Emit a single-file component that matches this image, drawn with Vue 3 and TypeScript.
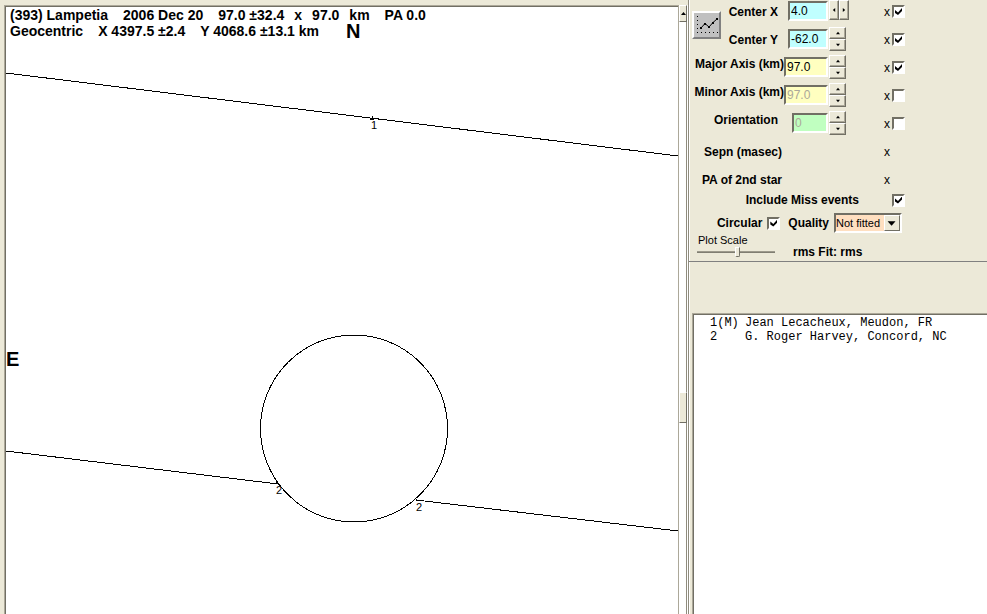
<script setup lang="ts">
import { ref } from 'vue'

interface Param {
  id: string
  label: string
  raised: boolean
  value: string
  size: string
  tint: string
  sideways: boolean
  fitted: boolean
}

const params = ref<Param[]>([
  { id: 'center-x', label: 'Center X', raised: false, value: '4.0', size: 'medium', tint: 'cyan', sideways: true, fitted: true },
  { id: 'center-y', label: 'Center Y', raised: false, value: '-62.0', size: 'medium', tint: 'cyan', sideways: false, fitted: true },
  { id: 'major', label: 'Major Axis (km)', raised: true, value: '97.0', size: 'wide', tint: 'yellow', sideways: false, fitted: true },
  { id: 'minor', label: 'Minor Axis (km)', raised: true, value: '97.0', size: 'wide', tint: 'yellow', sideways: false, fitted: false },
  { id: 'orientation', label: 'Orientation', raised: true, value: '0', size: 'narrow', tint: 'green', sideways: false, fitted: false },
])

const doubleStar = ['Sepn (masec)', 'PA of 2nd star']
const includeMiss = ref(true)
const circular = ref(true)
const quality = ref('Not fitted')
const plotScale = ref(52)

const observers = [
  { index: '1(M)', name: 'Jean Lecacheux, Meudon, FR' },
  { index: '2', name: 'G. Roger Harvey, Concord, NC' },
]

function step(p: Param, delta: number) {
  p.value = (parseFloat(p.value) + delta).toFixed(1)
}
</script>

<template>
  <main class="window">
    <section class="plot">
      <header class="caption">
        <p class="line">
          <span>(393) Lampetia</span><span>2006 Dec 20</span><span class="axes"><span>97.0 ±32.4</span><span>x</span><span>97.0</span><span>km</span></span><span>PA 0.0</span>
        </p>
        <p class="line">
          <span>Geocentric</span><span>X 4397.5 ±2.4</span><span>Y 4068.6 ±13.1 km</span><span class="north">N</span>
        </p>
      </header>
      <svg class="chords" viewBox="0 32 672 575">
        <g class="stroke">
          <path d="M0 66L672 149M0 444L272 477M410 493L672 524" />
          <path d="M366 109v4M364 112h4M270 475l4 3M409 491l3 3" />
          <circle cx="348" cy="421.500" r="93.500" />
        </g>
        <text class="compass" x="0" y="359">E</text>
        <text class="mark" x="365" y="122">1</text>
        <text class="mark" x="270" y="487">2</text>
        <text class="mark" x="410" y="504">2</text>
      </svg>
    </section>

    <div class="scrollbar">
      <button class="scroll-up" type="button" aria-label="Scroll up">
        <svg viewBox="0 0 5 3"><path d="M0 3L2.500 0L5 3z" /></svg>
      </button>
      <div class="scroll-thumb"></div>
    </div>

    <aside class="side">
      <form class="controls" @submit.prevent>
        <button class="plot-button" type="button" aria-label="Plot">
          <svg viewBox="0 0 24 22">
            <path class="dots" d="M2.500 2v16M2 18.500h22" />
            <path class="trace" d="M6 14L10 9.500L14 13L18 8.500L22 5" />
            <path class="nodes" d="M5 13h2v2h-2zM9 9h2v2h-2zM13 12h2v2h-2zM17 8h2v2h-2zM21 4h2v2h-2z" />
          </svg>
        </button>

        <div class="rows">
          <div v-for="p in params" :key="p.id" class="row">
            <label class="name" :class="{ raised: p.raised, flush: p.size === 'wide' }" :for="p.id">{{ p.label }}</label>
            <input :id="p.id" v-model="p.value" class="field" :class="[p.size, p.tint]" type="text" :disabled="!p.fitted" />
            <div class="spinner" :class="{ sideways: p.sideways }">
              <button type="button" :aria-label="'Change ' + p.label + ' back'" @click="step(p, p.sideways ? -1 : 1)">
                <svg viewBox="0 0 5 5"><path :d="p.sideways ? 'M4 0L1 2.500L4 5z' : 'M0 4L2.500 1L5 4z'" /></svg>
              </button>
              <button type="button" :aria-label="'Change ' + p.label + ' on'" @click="step(p, p.sideways ? 1 : -1)">
                <svg viewBox="0 0 5 5"><path :d="p.sideways ? 'M1 0L4 2.500L1 5z' : 'M0 1L2.500 4L5 1z'" /></svg>
              </button>
            </div>
            <label class="cross" :for="p.id + '-fit'">x</label>
            <input :id="p.id + '-fit'" v-model="p.fitted" class="tick" type="checkbox" />
          </div>
          <div v-for="name in doubleStar" :key="name" class="row">
            <span class="name star">{{ name }}</span>
            <span class="cross alone">x</span>
          </div>
        </div>

        <div class="miss">
          <label for="miss">Include Miss events</label>
          <input id="miss" v-model="includeMiss" class="tick" type="checkbox" />
        </div>

        <div class="shape">
          <label for="circular">Circular</label>
          <input id="circular" v-model="circular" class="tick" type="checkbox" />
          <label class="quality-name" for="quality">Quality</label>
          <div class="combo">
            <select id="quality" v-model="quality">
              <option>Not fitted</option>
            </select>
            <svg class="drop" viewBox="0 0 16 16"><path d="M3 6h9l-4.500 5z" /></svg>
          </div>
        </div>

        <div class="bottom">
          <div class="scale">
            <label for="scale">Plot Scale</label>
            <input id="scale" v-model="plotScale" type="range" min="0" max="100" />
          </div>
          <output class="rms">rms Fit: rms</output>
        </div>
      </form>

      <ol class="observers">
        <li v-for="o in observers" :key="o.index">
          <span>{{ o.index }}</span><span>{{ o.name }}</span>
        </li>
      </ol>
    </aside>
  </main>
</template>

<style>
body {
  background: #ece9d8;
}
</style>

<style scoped>
* {
  box-sizing: border-box;
}

.window {
  display: grid;
  grid-template-columns: minmax(0, 1fr) 10px 299px;
  min-height: 100vh;
  padding-left: 4px;
  overflow: hidden;
  background: #ece9d8;
  color: #000;
  font: 12px/14px "Liberation Sans", Arial, sans-serif;
}

.plot {
  margin-top: 5px;
  border: solid #aca899;
  border-width: 1px 0 0 1px;
  box-shadow: inset 1px 1px #716f64;
  background: #fff;
  padding: 1px 0 0 1px;
  overflow: hidden;
}

.caption {
  padding-left: 4px;
  font-size: 14px;
  font-weight: 700;
  line-height: 16px;
  white-space: nowrap;
}

.line {
  display: flex;
  gap: 15px;
  height: 16px;
  margin: 0;
}

.axes {
  display: flex;
  gap: 10px;
}

.north {
  margin-left: 12px;
  font-size: 20px;
}

.chords {
  display: block;
  width: 100%;
}

.stroke {
  fill: none;
  stroke: #000;
  stroke-width: 1;
  shape-rendering: crispEdges;
}

.compass {
  font-size: 20px;
  font-weight: 700;
}

.mark {
  font-size: 11px;
}

.scrollbar {
  display: flex;
  flex-direction: column;
  justify-content: flex-start;
  margin-top: 5px;
  border-left: 1px solid #aca899;
  border-right: 1px solid #fff;
  background: linear-gradient(90deg, #fff 7px, #8f8c7e 7px, #8f8c7e 8px);
}

.scroll-up,
.scroll-thumb {
  width: 8px;
  border: 1px solid;
  border-color: #fff #716f64 #716f64 #fff;
  background: #ece9d8;
}

.scroll-up {
  display: grid;
  place-items: center;
  height: 17px;
  padding: 0;
}

.scroll-up svg {
  width: 5px;
  height: 3px;
}

.scroll-thumb {
  height: 31px;
  margin-top: 370px;
}

.side {
  display: flex;
  flex-direction: column;
  border-left: 1px solid #8f8c7e;
  box-shadow: inset 1px 0 #fff;
}

.controls {
  display: grid;
  grid-template-columns: 216px;
  height: 262px;
  align-content: start;
  border-bottom: 1px solid #808080;
  font-weight: 700;
}

.plot-button {
  grid-area: 1 / 1;
  display: grid;
  place-items: center;
  align-self: start;
  width: 29px;
  height: 28px;
  margin: 11px 0 0 3px;
  padding: 0;
  border: 2px solid;
  border-color: #fff #808080 #808080 #fff;
  background: #c0c0c0;
}

.plot-button svg {
  width: 24px;
  height: 22px;
}

.dots {
  fill: none;
  stroke: #000;
  stroke-dasharray: 1 3;
}

.trace {
  fill: none;
  stroke: #000;
}

.rows {
  grid-area: 1 / 1;
  margin-top: -1px;
  pointer-events: none;
}

.row {
  display: grid;
  grid-template-columns: 95px 45px 18px 1fr 13px;
  align-items: start;
  height: 28px;
}

.row > * {
  pointer-events: auto;
}

.name {
  justify-self: end;
  margin-top: 6px;
  padding-right: 6px;
  white-space: nowrap;
}

.raised {
  margin-top: 2px;
}

.flush {
  padding-right: 0;
}

.star {
  padding-right: 2px;
}

.field {
  justify-self: end;
  height: 20px;
  margin: 2px 1px 0 0;
  padding: 0 0 0 1px;
  border: 2px solid;
  border-color: #716f64 #fff #fff #716f64;
  border-radius: 0;
  font: 12px/14px "Liberation Sans", Arial, sans-serif;
  color: #000;
}

.field:disabled {
  color: #aca899;
}

.wide { width: 44px; }
.medium { width: 40px; }
.narrow { width: 36px; }
.cyan { background: #c0ffff; }
.yellow { background: #ffffc0; }
.green { background: #c0ffc0; }

.spinner {
  display: grid;
  grid-template-rows: 12px 12px;
}

.spinner button {
  display: grid;
  place-items: center;
  width: 17px;
  padding: 0;
  border: 1px solid;
  border-color: #fff #716f64 #716f64 #fff;
  box-shadow: inset -1px -1px #aca899;
  background: #ece9d8;
}

.spinner svg {
  width: 4px;
  height: 4px;
}

.sideways {
  grid-template: 20px / 10px 10px;
  padding-top: 1px;
}

.sideways button {
  width: 10px;
}

.cross {
  justify-self: end;
  margin-top: 6px;
  padding-right: 2px;
  font-weight: 400;
}

.alone {
  grid-column: 4;
}

.tick {
  appearance: none;
  width: 13px;
  height: 13px;
  margin: 0;
  border: 2px solid;
  border-color: #716f64 #fff #fff #716f64;
  background: #fff;
}

.row .tick {
  margin-top: 6px;
}

.tick:checked::before {
  content: "";
  display: block;
  width: 7px;
  height: 7px;
  margin: 1px;
  background: #000;
  clip-path: polygon(0 29%, 43% 64%, 100% 0, 100% 43%, 43% 100%, 0 71%);
}

.miss {
  display: flex;
  align-items: center;
  justify-content: flex-end;
  gap: 33px;
  height: 14px;
  margin-top: -2px;
}

.shape {
  display: flex;
  align-items: center;
  justify-content: flex-end;
  gap: 5px;
  height: 20px;
  margin-top: 6px;
  padding-right: 3px;
}

.quality-name {
  padding-left: 3px;
}

.combo {
  display: grid;
  grid-template-columns: 1fr 16px;
  width: 68px;
  height: 20px;
  border: 2px solid;
  border-color: #716f64 #fff #fff #716f64;
}

.combo select {
  grid-area: 1 / 1 / 2 / 3;
  appearance: none;
  width: 100%;
  margin: 0;
  padding: 0;
  border: 0;
  border-radius: 0;
  background: #ffdfc0;
  font: 11px/14px "Liberation Sans", Arial, sans-serif;
  color: #000;
}

.drop {
  grid-area: 1 / 2;
  width: 16px;
  height: 16px;
  border: 1px solid;
  border-color: #fff #716f64 #716f64 #fff;
  background: #ece9d8;
  pointer-events: none;
}

.bottom {
  display: flex;
  gap: 18px;
  padding-left: 8px;
}

.scale {
  width: 78px;
  font-size: 11px;
  font-weight: 400;
}

.scale label {
  display: block;
  padding-left: 1px;
}

.scale input {
  appearance: none;
  display: block;
  width: 100%;
  height: 10px;
  margin: 0;
  background: linear-gradient(#aca899, #716f64) 0 4px / 100% 2px no-repeat;
}

.scale input::-webkit-slider-thumb {
  appearance: none;
  width: 5px;
  height: 10px;
  border: 1px solid;
  border-color: #fff #716f64 #716f64 #fff;
  border-radius: 0 0 2px 2px;
  background: #ece9d8;
}

.rms {
  margin-top: 12px;
}

.observers {
  flex: 1;
  margin: 51px 0 0 3px;
  padding: 2px 0 0 17px;
  border: solid #aca899;
  border-width: 1px 0 0 1px;
  box-shadow: inset 1px 1px #716f64;
  background: #fff;
  font: 12px/14px "Liberation Mono", "Courier New", monospace;
  list-style: none;
}

.observers li {
  display: grid;
  grid-template-columns: 35px 1fr;
}
</style>
